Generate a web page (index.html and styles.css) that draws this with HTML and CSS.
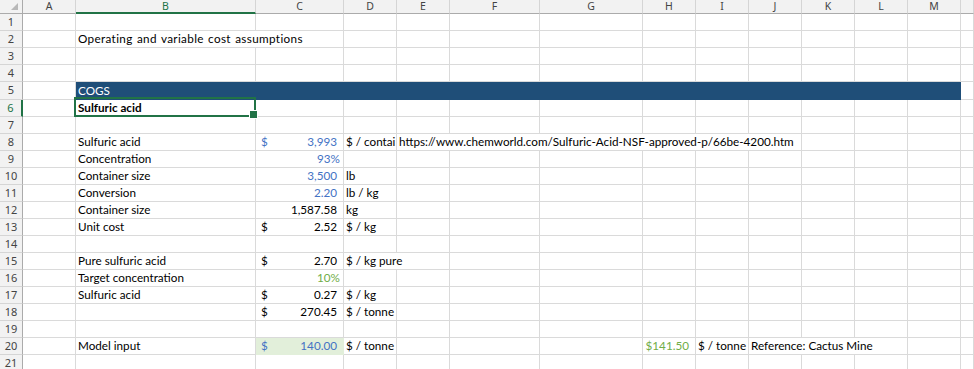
FILE: index.html
```html
<!DOCTYPE html>
<html lang="en">
<head>
    <meta charset="UTF-8">
    <meta name="viewport" content="width=device-width, initial-scale=1.0">
    <title>Operating and variable cost assumptions</title>
    <link rel="stylesheet" href="styles.css">
</head>
<body>
    <div id="sheet" class="sheet"></div>

    <script>
        const COLUMNS = ["A", "B", "C", "D", "E", "F", "G", "H", "I", "J", "K", "L", "M", ""];
        const ROW_COUNT = 21;
        const ACTIVE_COL = "B";
        const ACTIVE_ROW = 6;

        // Cell contents by row. money = accounting format ($ left, number right)
        const CELLS = {
            2: [{ col: "B", text: "Operating and variable cost assumptions", span: 2, cls: "title" }],
            5: [{ col: "B", text: "COGS", span: 12, cls: "band" }],
            6: [{ col: "B", text: "Sulfuric acid", cls: "bold selected" }],
            8: [
                { col: "B", text: "Sulfuric acid" },
                { col: "C", money: "3,993", cls: "input" },
                { col: "D", text: "$ / contai" },
                { col: "E", text: "https://www.chemworld.com/Sulfuric-Acid-NSF-approved-p/66be-4200.htm", span: 6 }
            ],
            9: [
                { col: "B", text: "Concentration" },
                { col: "C", pct: "93%", cls: "input" }
            ],
            10: [
                { col: "B", text: "Container size" },
                { col: "C", num: "3,500", cls: "input" },
                { col: "D", text: "lb" }
            ],
            11: [
                { col: "B", text: "Conversion" },
                { col: "C", num: "2.20", cls: "input" },
                { col: "D", text: "lb / kg" }
            ],
            12: [
                { col: "B", text: "Container size" },
                { col: "C", num: "1,587.58" },
                { col: "D", text: "kg" }
            ],
            13: [
                { col: "B", text: "Unit cost" },
                { col: "C", money: "2.52" },
                { col: "D", text: "$ / kg" }
            ],
            15: [
                { col: "B", text: "Pure sulfuric acid" },
                { col: "C", money: "2.70" },
                { col: "D", text: "$ / kg pure", span: 2 }
            ],
            16: [
                { col: "B", text: "Target concentration" },
                { col: "C", pct: "10%", cls: "assumed" }
            ],
            17: [
                { col: "B", text: "Sulfuric acid" },
                { col: "C", money: "0.27" },
                { col: "D", text: "$ / kg" }
            ],
            18: [
                { col: "C", money: "270.45" },
                { col: "D", text: "$ / tonne" }
            ],
            20: [
                { col: "B", text: "Model input" },
                { col: "C", money: "140.00", cls: "input filled" },
                { col: "D", text: "$ / tonne" },
                { col: "H", num: "$141.50", cls: "assumed" },
                { col: "I", text: "$ / tonne" },
                { col: "J", text: "Reference: Cactus Mine", span: 3 }
            ]
        };

        function makeCell(className, text) {
            const div = document.createElement("div");
            div.className = className;
            if (text) div.textContent = text;
            return div;
        }

        function buildSheet() {
            const sheet = document.getElementById("sheet");

            // Column headers
            sheet.appendChild(makeCell("corner"));
            COLUMNS.forEach((letter) => {
                const active = letter === ACTIVE_COL ? " active" : "";
                sheet.appendChild(makeCell("col-head" + active, letter));
            });

            // Rows
            for (let r = 1; r <= ROW_COUNT; r++) {
                const active = r === ACTIVE_ROW ? " active" : "";
                sheet.appendChild(makeCell("row-head" + active, String(r)));

                const specs = CELLS[r] || [];
                let i = 0;
                while (i < COLUMNS.length) {
                    const spec = specs.find((c) => c.col === COLUMNS[i]);
                    const cell = makeCell("cell");

                    if (spec) {
                        if (spec.cls) cell.className += " " + spec.cls;
                        if (spec.span) cell.className += " span-" + spec.span;

                        if (spec.money) {
                            cell.className += " money";
                            cell.innerHTML = `<span>$</span><span>${spec.money}</span>`;
                        } else if (spec.num) {
                            cell.className += " num";
                            cell.textContent = spec.num;
                        } else if (spec.pct) {
                            cell.className += " pct";
                            cell.textContent = spec.pct;
                        } else {
                            cell.textContent = spec.text;
                        }
                        i += spec.span || 1;
                    } else {
                        i++;
                    }
                    sheet.appendChild(cell);
                }
            }
        }

        buildSheet();
    </script>
</body>
</html>
```

FILE: styles.css
```css
* {
    box-sizing: border-box;
}

body {
    margin: 0;
    padding: 0;
    background-color: #fff;
    font-family: "Lato", "Liberation Sans", sans-serif;
}

.sheet {
    display: grid;
    grid-template-columns: 23px 53px 180px 88px 53px 53px 90px 103px 53px 53px 53px 53px 53px 53px 1fr;
    grid-template-rows: 14px repeat(4, 17px) 18px repeat(16, 17px);
    width: 974px;
    height: 369px;
    overflow: hidden;
}

/* Headers */
.corner {
    position: relative;
    background-color: #f2f2f2;
    border-right: 1px solid #ababab;
    border-bottom: 1px solid #ababab;
}

.corner::after {
    content: "";
    position: absolute;
    right: 4px;
    bottom: 3px;
    width: 0;
    height: 0;
    border-left: 7px solid transparent;
    border-bottom: 7px solid #b8b8b8;
}

.col-head {
    background-color: #f2f2f2;
    border-right: 1px solid #d5d5d5;
    border-bottom: 1px solid #ababab;
    color: #444;
    font-family: "Noto Sans", "Liberation Sans", sans-serif;
    font-size: 10.5px;
    line-height: 13px;
    text-align: center;
}

.col-head.active {
    color: #217346;
    border-bottom: 2px solid #217346;
}

.row-head {
    background-color: #f2f2f2;
    border-right: 1px solid #ababab;
    border-bottom: 1px solid #d5d5d5;
    color: #444;
    font-family: "Noto Sans", "Liberation Sans", sans-serif;
    font-size: 11px;
    line-height: 16px;
    text-align: center;
}

.row-head.active {
    color: #217346;
    border-right: 2px solid #217346;
}

/* Cells */
.cell {
    border-right: 1px solid #dadada;
    border-bottom: 1px solid #dadada;
    padding: 0 2px;
    color: #000;
    font-size: 11.7px;
    line-height: 15px;
    white-space: nowrap;
    overflow: hidden;
}

.title {
    word-spacing: 1px;
    letter-spacing: 0.35px;
}

.span-2 { grid-column: span 2; }
.span-3 { grid-column: span 3; }
.span-6 { grid-column: span 6; }
.span-12 { grid-column: span 12; }

.bold {
    font-weight: bold;
}

.band {
    background-color: #1f4e78;
    border-color: #1f4e78;
    color: #fff;
    line-height: 16px;
}

.money {
    display: flex;
    justify-content: space-between;
    padding: 0 6px 0 5px;
}

.num {
    text-align: right;
    padding-right: 6px;
}

.pct {
    text-align: right;
    padding-right: 3px;
}

.input {
    color: #4472c4;
}

.assumed {
    color: #70ad47;
}

.filled {
    background-color: #e2efda;
    border-color: #e2efda;
}

.selected {
    position: relative;
    overflow: visible;
    z-index: 1;
}

.selected::after {
    content: "";
    position: absolute;
    left: -2px;
    top: -3px;
    right: -1px;
    bottom: -1px;
    border: 2px solid #217346;
}

.selected::before {
    content: "";
    position: absolute;
    right: -3px;
    bottom: -3px;
    width: 7px;
    height: 7px;
    background-color: #217346;
    border: 1px solid #fff;
    z-index: 1;
}
```
